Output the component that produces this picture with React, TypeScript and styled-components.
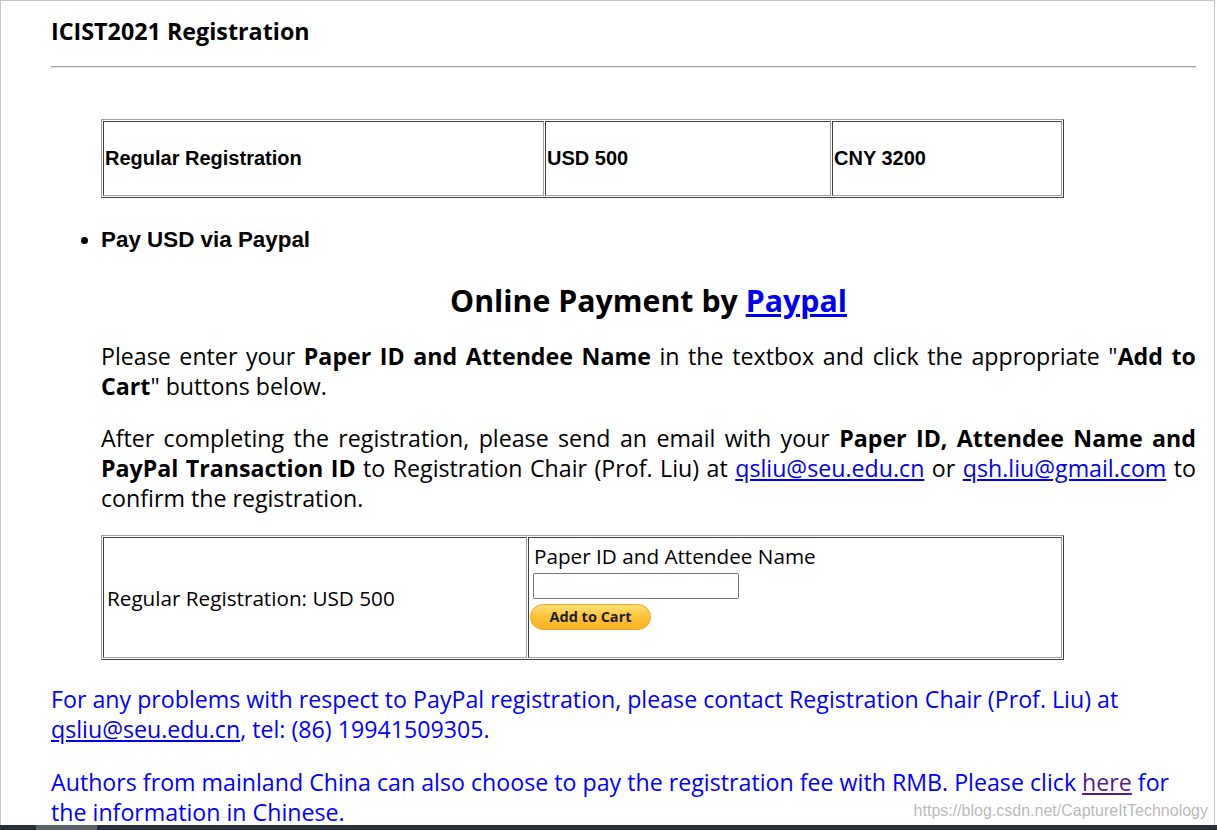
import styled, { createGlobalStyle } from "styled-components";

const GlobalStyle = createGlobalStyle`
  html, body {
    margin: 0;
    padding: 0;
    background: #ffffff;
  }
  body {
    font-family: "Open Sans", "Liberation Sans", sans-serif;
    color: #000000;
  }
`;

const prices = [
  { label: "Regular Registration", usd: "USD 500", cny: "CNY 3200" },
];

const App = () => {
  return (
    <>
      <GlobalStyle />
      <Screen>
        <Frame>
          <Title>ICIST2021 Registration</Title>
          <Rule />
          <Indent>
            <PriceTable>
              <tbody>
                {prices.map((p) => (
                  <tr key={p.label}>
                    <PriceCell width={441}>{p.label}</PriceCell>
                    <PriceCell width={286}>{p.usd}</PriceCell>
                    <PriceCell>{p.cny}</PriceCell>
                  </tr>
                ))}
              </tbody>
            </PriceTable>
          </Indent>
          <Bullets>
            <li>Pay USD via Paypal</li>
          </Bullets>
          <Indent>
            <Heading>
              Online Payment by <Link href="#">Paypal</Link>
            </Heading>
            <Para>
              Please enter your <b>Paper ID and Attendee Name</b> in the
              textbox and click the appropriate "<b>Add to Cart</b>" buttons
              below.
            </Para>
            <Para $gap={22}>
              After completing the registration, please send an email with
              your <b>Paper ID, Attendee Name and PayPal Transaction ID</b> to
              Registration Chair (Prof. Liu) at{" "}
              <Link href="#">qsliu@seu.edu.cn</Link> or{" "}
              <Link href="#">qsh.liu@gmail.com</Link> to confirm the
              registration.
            </Para>
            <CartTable>
              <tbody>
                <tr>
                  <CartLabel>Regular Registration: USD 500</CartLabel>
                  <CartForm>
                    <FieldLabel>Paper ID and Attendee Name</FieldLabel>
                    <TextBox type="text" />
                    <CartButton type="button">Add to Cart</CartButton>
                  </CartForm>
                </tr>
              </tbody>
            </CartTable>
          </Indent>
          <Notice $gap={24}>
            For any problems with respect to PayPal registration, please
            contact Registration Chair (Prof. Liu) at{" "}
            <Link href="#">qsliu@seu.edu.cn</Link>, tel: (86) 19941509305.
          </Notice>
          <Notice $gap={23}>
            Authors from mainland China can also choose to pay the
            registration fee with RMB. Please click{" "}
            <Visited href="#">here</Visited> for the information in Chinese.
          </Notice>
          <Watermark>https://blog.csdn.net/CaptureItTechnology</Watermark>
        </Frame>
        <BottomBar>
          <BarThumb />
        </BottomBar>
      </Screen>
    </>
  );
};

export default App;

const Screen = styled.div`
  width: 1217px;
  height: 830px;
  display: flex;
  flex-direction: column;
  overflow: hidden;
`;

const Frame = styled.div`
  position: relative;
  box-sizing: border-box;
  width: 1215px;
  height: 825px;
  border: 1px solid #c4c4c4;
  border-bottom: none;
  padding: 15px 18px 0 50px;
  display: flex;
  flex-direction: column;
  overflow: hidden;
`;

const Title = styled.h1`
  margin: 0;
  font-size: 23.3px;
  font-weight: 700;
  line-height: 30px;
`;

const Rule = styled.hr`
  margin: 20px 0 0;
  height: 0;
  border: none;
  border-top: 1px solid #a0a0a0;
  border-bottom: 1px solid #e6e6e6;
`;

const Indent = styled.div`
  padding-left: 50px;
  display: flex;
  flex-direction: column;
`;

const PriceTable = styled.table`
  margin-top: 51px;
  width: 963px;
  border-collapse: separate;
  border-spacing: 1px;
  border: 1px solid;
  border-color: #a0a0a0 #404040 #404040 #a0a0a0;
`;

const PriceCell = styled.td<{ width?: number }>`
  ${({ width }) => (width ? `width: ${width}px;` : "")}
  box-sizing: border-box;
  height: 75px;
  padding: 1px;
  border: 1px solid;
  border-color: #404040 #a0a0a0 #a0a0a0 #404040;
  font-family: "Liberation Sans", Arial, sans-serif;
  font-size: 20px;
  font-weight: 700;
  vertical-align: middle;
`;

const Bullets = styled.ul`
  margin: 27px 0 0;
  padding-left: 50px;
  font-family: "Liberation Sans", Arial, sans-serif;
  font-size: 22.4px;
  font-weight: 700;
  line-height: 30px;
`;

const Heading = styled.h2`
  margin: 26px 0 0;
  text-align: center;
  font-size: 30.3px;
  font-weight: 700;
  line-height: 40px;
`;

const Para = styled.p<{ $gap?: number }>`
  margin: ${({ $gap }) => $gap ?? 20}px 0 0;
  font-size: 23.2px;
  line-height: 30px;
  text-align: justify;
`;

const Link = styled.a`
  color: #0000ee;
  text-decoration: underline;
`;

const Visited = styled.a`
  color: #551a8b;
  text-decoration: underline;
`;

const CartTable = styled.table`
  margin-top: 22px;
  width: 963px;
  border-collapse: separate;
  border-spacing: 1px;
  border: 1px solid;
  border-color: #a0a0a0 #404040 #404040 #a0a0a0;
`;

const CartLabel = styled.td`
  box-sizing: border-box;
  width: 424px;
  height: 121px;
  padding: 3px;
  border: 1px solid;
  border-color: #404040 #a0a0a0 #a0a0a0 #404040;
  font-size: 20.7px;
  vertical-align: middle;
`;

const CartForm = styled.td`
  box-sizing: border-box;
  height: 121px;
  padding: 3px 5px;
  border: 1px solid;
  border-color: #404040 #a0a0a0 #a0a0a0 #404040;
  vertical-align: top;
`;

const FieldLabel = styled.div`
  font-size: 20.7px;
  line-height: 30px;
`;

const TextBox = styled.input`
  display: block;
  box-sizing: border-box;
  width: 206px;
  height: 26px;
  margin: 2px 0 0 -1px;
  border: 1px solid #767676;
  border-radius: 2px;
  background: #ffffff;
`;

const CartButton = styled.button`
  display: block;
  box-sizing: border-box;
  width: 121px;
  height: 26px;
  margin: 5px 0 0 -4px;
  padding: 0 0 2px;
  border: 1px solid #eaa81a;
  border-radius: 13px;
  background: linear-gradient(#ffdf7a 0%, #ffc43a 45%, #f9b227 100%);
  color: #1c1c3a;
  font-family: "Open Sans", sans-serif;
  font-size: 14.5px;
  font-weight: 700;
  cursor: pointer;
`;

const Notice = styled.p<{ $gap: number }>`
  margin: ${({ $gap }) => $gap}px 0 0;
  color: #0000ff;
  font-size: 23.2px;
  line-height: 30px;
`;

const Watermark = styled.div`
  position: absolute;
  right: 6px;
  bottom: 5px;
  font-family: "Liberation Sans", Arial, sans-serif;
  font-size: 16px;
  color: rgba(160, 160, 160, 0.75);
  text-shadow: 0 0 1px #ffffff;
`;

const BottomBar = styled.div`
  height: 5px;
  width: 1217px;
  background: #263238;
`;

const BarThumb = styled.div`
  margin-left: 36px;
  width: 61px;
  height: 5px;
  background: #5b6267;
`;
